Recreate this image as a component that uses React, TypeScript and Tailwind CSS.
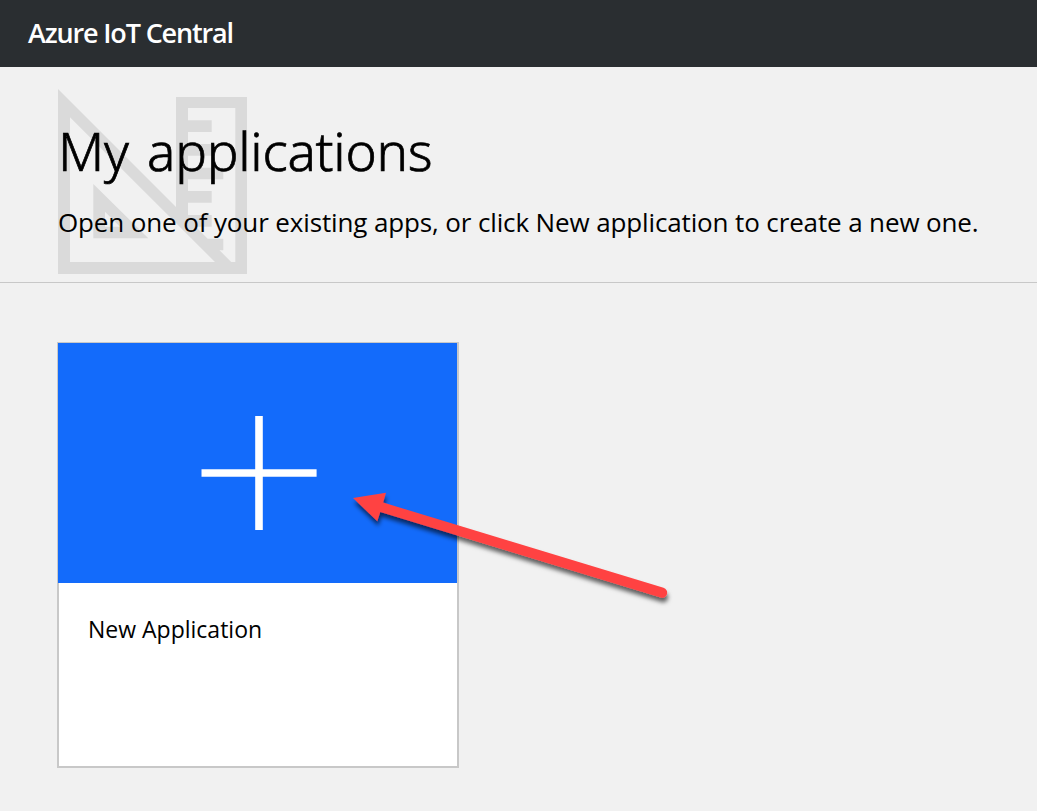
function DraftingIcon() {
  return (
    <svg className="absolute left-[58px] top-[22px]" width="189" height="185" viewBox="58 89 189 185" fill="#dadada" aria-hidden="true">
      <path
        fillRule="evenodd"
        d="M58 89 L176 207 V97 H247 V274 H58 Z M70 117.3 V262 H215 Z M188 108 V120.3 H211.7 V132 H188 V144 H211.7 V155.7 H188 V167.7 H223.3 V179.3 H188 V191 H211.7 V202.7 H188 V215 H211.7 V226.7 H195.7 L207.7 238.7 H223.3 V250.3 H219.5 L231.2 262 H235.3 V108 Z M93.3 184 L148.3 238.3 H93.3 Z M105 211.7 V226.7 H120 Z"
      />
    </svg>
  );
}

function Arrow() {
  return (
    <svg className="pointer-events-none absolute left-[340px] top-[480px]" width="340" height="135" viewBox="340 480 340 135" aria-hidden="true">
      <defs>
        <filter id="arrow-shadow" x="-10%" y="-10%" width="120%" height="130%">
          <feDropShadow dx="1" dy="4.5" stdDeviation="2.3" floodColor="#000" floodOpacity="0.6" />
        </filter>
      </defs>
      <path
        d="M353 498 L386 492.7 L383.2 502.6 L663.5 587.8 A5 5 0 0 1 660.6 597.6 L380.3 512 L377.3 521.3 Z"
        fill="#ff4343"
        filter="url(#arrow-shadow)"
      />
    </svg>
  );
}

export default function App() {
  return (
    <div className="relative h-[811px] w-full overflow-hidden bg-[#f1f1f1] font-['Open_Sans','Noto_Sans',sans-serif] text-black">
      <header className="flex h-[67px] items-center bg-[#2a2e31] pb-[2px] pl-[28px]">
        <span className="whitespace-nowrap text-[27px] leading-8 font-semibold tracking-[-1.15px] text-white">Azure IoT Central</span>
      </header>
      <section className="relative h-[216px] border-b border-[#c8c8c8] pl-[58px]">
        <DraftingIcon />
        <div className="relative flex flex-col items-start pt-[48px]">
          <h1 className="whitespace-nowrap font-['Noto_Sans','Open_Sans',sans-serif] text-[53px] leading-[72px] font-light tracking-[-0.25px] [word-spacing:5px] [-webkit-text-stroke:0.7px_black]">My applications</h1>
          <p className="mt-[17px] whitespace-nowrap text-[26px] leading-9 font-normal tracking-[-0.13px]">Open one of your existing apps, or click New application to create a new one.</p>
        </div>
      </section>
      <main className="pl-[57px] pt-[59px]">
        <button className="flex h-[426px] w-[402px] flex-col items-stretch border-2 border-t border-[#c8c8c8] bg-white text-left">
          <span className="-ml-px flex h-[240px] items-center justify-center bg-[#136bfb]">
            <svg className="ml-[3px] mt-5" width="116" height="114" viewBox="201 416 116 114" fill="#fff" aria-hidden="true">
              <path d="M255.2 416 H262.8 V469.2 H316.6 V476.8 H262.8 V530 H255.2 V476.8 H201.5 V469.2 H255.2 Z" />
            </svg>
          </span>
          <span className="pl-[29px] pt-[30px] text-[23px] leading-8 font-normal whitespace-nowrap">New Application</span>
        </button>
      </main>
      <Arrow />
    </div>
  );
}
